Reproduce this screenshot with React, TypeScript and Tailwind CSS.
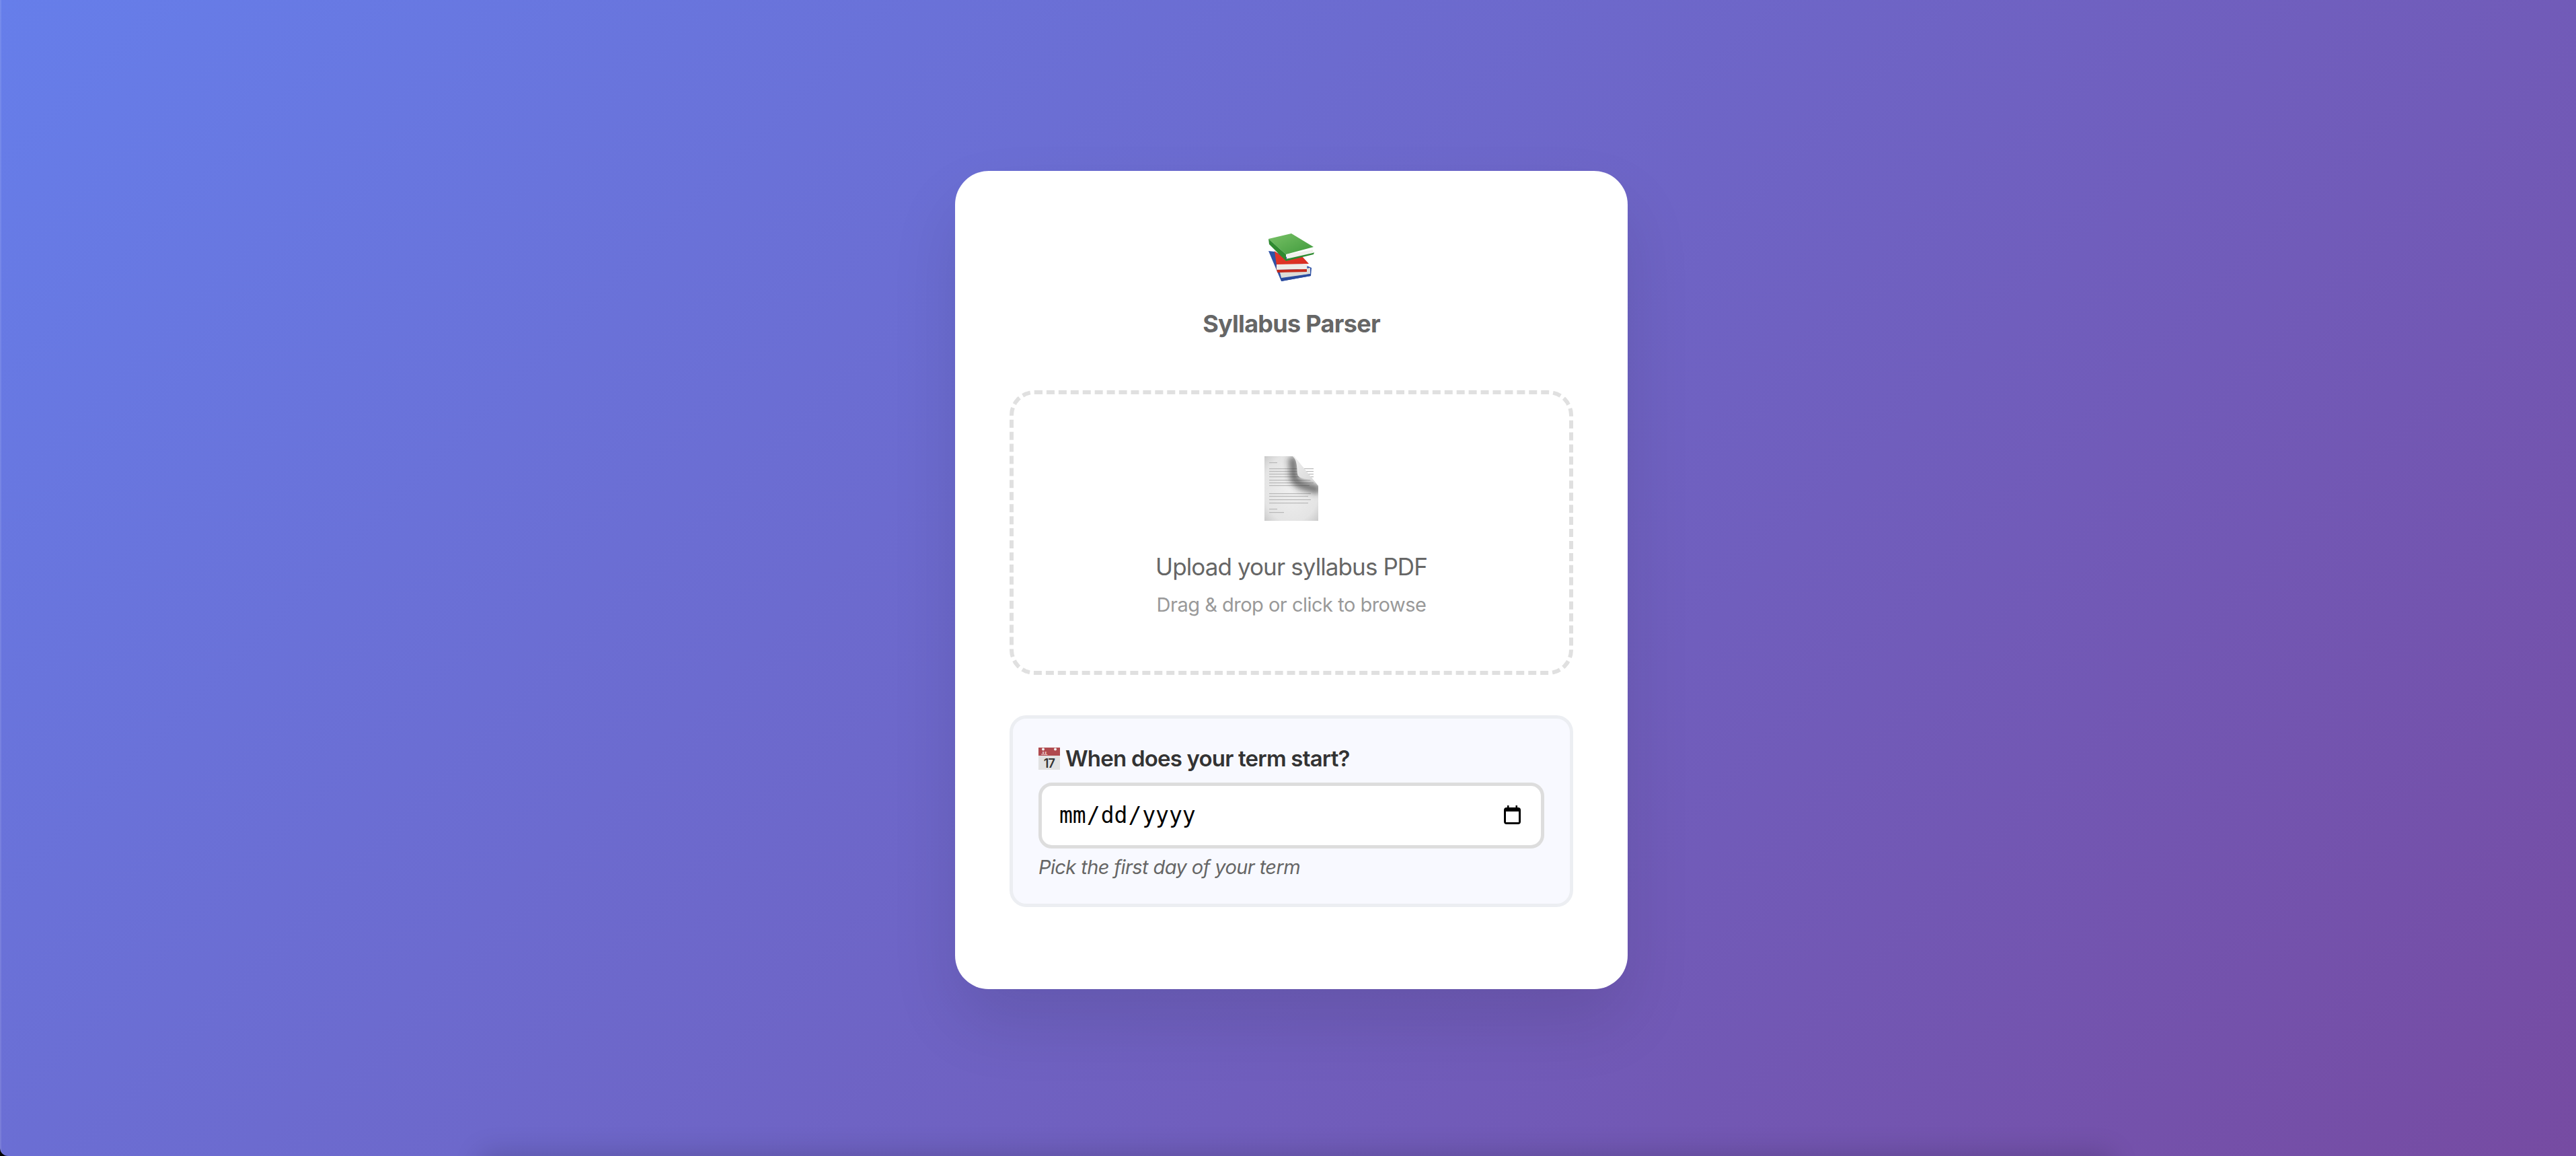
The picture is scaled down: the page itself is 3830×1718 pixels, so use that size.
import React from "react";

function Books() {
  return (
    <svg width="70" height="71" viewBox="0 0 70 71" aria-hidden="true">
      <defs>
        <linearGradient id="bg" x1="0" y1="0" x2="1" y2="1">
          <stop offset="0" stopColor="#78c166" />
          <stop offset="1" stopColor="#3f9a3c" />
        </linearGradient>
        <linearGradient id="br" x1="0" y1="0" x2="1" y2="1">
          <stop offset="0" stopColor="#e6392b" />
          <stop offset="1" stopColor="#d72d20" />
        </linearGradient>
      </defs>
      <path d="M1 26 L10 27 L65 51 L64 63 L20 71 Z" fill="#2f53a8" />
      <path d="M18 58 L63 51 L63 60 L20 66 Z" fill="#dcdcd8" />
      <path d="M20 67 L64 60 L64 63 L20 71 Z" fill="#2a4b9e" />
      <path d="M10 26 L27 39 L50 33 L61 45 L13 47 Z" fill="url(#br)" />
      <path d="M13 46 L59 45 L58 53 L13 54 Z" fill="#eeece8" />
      <path d="M11 40 L13 54 L58 53 L58 57 L14 58 Z" fill="#c42a1d" />
      <path d="M1 8 L35 0 L68 20 L27 31 Z" fill="url(#bg)" />
      <path d="M1 8 L27 31 L27 41 L2 16 Z" fill="#2f8a30" />
      <path d="M28 31 L67 24 L67 30 L28 38 Z" fill="#f1f1ec" />
      <path d="M27 38 L67 29 L69 28 L68 31 L27 41 Z" fill="#2c8a2f" />
    </svg>
  );
}

function PageIcon() {
  const lines = [
    [7, 9, 12], [7, 18, 66], [7, 22, 66], [7, 26, 66], [7, 30, 66], [7, 35, 66], [7, 39, 66], [7, 43, 60],
    [7, 55, 62], [7, 59, 58], [7, 64, 62], [7, 69, 58], [7, 78, 12], [7, 83, 22],
  ];
  return (
    <svg width="80" height="96" viewBox="0 0 80 96" aria-hidden="true">
      <defs>
        <radialGradient id="pg" cx="0.5" cy="0.5" r="0.75">
          <stop offset="0" stopColor="#f0f0f0" />
          <stop offset="0.7" stopColor="#e4e4e4" />
          <stop offset="1" stopColor="#c4c4c4" />
        </radialGradient>
        <linearGradient id="fold" x1="0" y1="0" x2="1" y2="1">
          <stop offset="0" stopColor="#f0f0f0" />
          <stop offset="1" stopColor="#d4d4d4" />
        </linearGradient>
        <filter id="b1" x="-40%" y="-40%" width="180%" height="180%">
          <feGaussianBlur stdDeviation="4.5" />
        </filter>
        <clipPath id="pc">
          <path d="M0 0 H42 L80 44 V96 H0 Z" />
        </clipPath>
      </defs>
      <path d="M0 0 H44 L80 44 V96 H0 Z" fill="url(#pg)" />
      {lines.map((l, i) => (
        <rect key={i} x={l[0]} y={l[1]} width={l[2]} height="1.2" fill="#b8b8b8" />
      ))}
      <g clipPath="url(#pc)">
        <path d="M40 2 C46 12 42 26 44 32 C48 42 58 44 66 46 C72 48 77 48 82 52" fill="none" stroke="#333" strokeOpacity="0.62" strokeWidth="13" filter="url(#b1)" />
      </g>
      <path d="M42 0 H44 L80 44 C76 38 70 36 64 34 C56 33 50 32 49 26 C48 18 49 6 42 0 Z" fill="url(#fold)" />
    </svg>
  );
}

function CalendarEmoji() {
  return (
    <svg width="32" height="33" viewBox="0 0 32 33" aria-hidden="true" className="shrink-0">
      <rect x="0" y="0" width="32" height="33" fill="#e2e2e2" />
      <rect x="0" y="0" width="32" height="12" fill="#b04a4f" />
      <circle cx="7" cy="2.5" r="2" fill="#f3f3f3" />
      <circle cx="25" cy="2.5" r="2" fill="#f3f3f3" />
      <text x="4" y="10.5" fontSize="6" fill="#f3d5d5" fontFamily="Inter, sans-serif">JUL</text>
      <text x="16" y="30" fontSize="18" fill="#333" textAnchor="middle" fontFamily="Inter, sans-serif">17</text>
    </svg>
  );
}

export default function App() {
  return (
    <div className="relative w-full h-[1718px] overflow-hidden pl-[10px] pt-[254px] flex justify-center bg-[linear-gradient(135deg,#667eea_0%,#764ba2_100%)] font-['Inter','Liberation_Sans',sans-serif]">
      <div className="absolute left-[730px] right-[705px] top-[1728px] h-[60px] shadow-[0_0_40px_14px_rgba(0,0,0,0.17)]" />
      <div className="absolute left-0 top-0 bottom-0 w-[2px] bg-white/10" />
      <div className="absolute left-0 bottom-0 w-[30px] h-[30px] rounded-bl-[12px] shadow-[-8px_8px_0_#000]" />
      <div className="relative w-[1000px] h-[1216px] rounded-[50px] bg-white px-[81px] pt-[93px] shadow-[0_50px_100px_rgba(0,0,0,0.1)] flex flex-col">
        <div className="flex flex-col items-center">
          <Books />
          <h1 className="mt-[41px] text-[36px] leading-[44px] font-bold tracking-[-0.7px] text-[#666]">Syllabus Parser</h1>
        </div>
        <div className="mt-[77px] h-[423px] rounded-[37px] border-[6px] border-dashed border-[#e0e0e0] flex flex-col items-center pt-[92px]">
          <PageIcon />
          <p className="mt-[46px] text-[35px] leading-[44px] tracking-[-0.9px] text-[#666]">Upload your syllabus PDF</p>
          <p className="mt-[17px] text-[29px] leading-[36px] tracking-[-0.5px] text-[#999]">Drag &amp; drop or click to browse</p>
        </div>
        <div className="mt-[60px] h-[285px] rounded-[25px] border-[5px] border-[#eceef2] bg-[#f8f9ff] px-[38px] pt-[39px]">
          <label className="flex items-center gap-[8px] text-[33px] leading-[40px] font-semibold tracking-[-0.8px] text-[#333]">
            <CalendarEmoji />
            <span>When does your term start?</span>
          </label>
          <div className="relative mt-[16px]">
            <input
              type="date"
              className="w-full h-[98px] rounded-[20px] border-[5px] border-[#ddd] bg-white pl-[25px] pr-[20px] text-[33px] text-black font-['DejaVu_Sans_Mono',monospace] [&::-webkit-calendar-picker-indicator]:opacity-0"
            />
            <svg className="absolute right-[35px] top-[34px]" width="25" height="28" viewBox="0 0 25 28" aria-hidden="true">
              <path d="M5 0h2.5v3h10V0H20v3h1a4 4 0 0 1 4 4v17a4 4 0 0 1-4 4H4a4 4 0 0 1-4-4V7a4 4 0 0 1 4-4h1z" fill="#000" />
              <rect x="3" y="9" width="19" height="16" fill="#fff" />
            </svg>
          </div>
          <p className="mt-[10px] text-[29px] leading-[36px] italic tracking-[-0.6px] text-[#666]">Pick the first day of your term</p>
        </div>
      </div>
    </div>
  );
}
